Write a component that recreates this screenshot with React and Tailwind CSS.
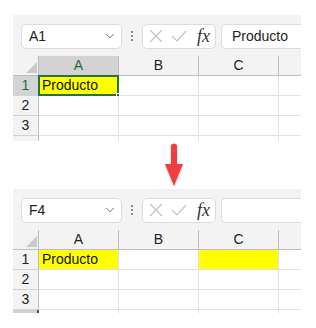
import React from "react";
import { ChevronDown } from "lucide-react";

const font = { fontFamily: '"Liberation Sans", Arial, sans-serif' };

const cols = ["A", "B", "C"];

const Toolbar = ({ name, value }) => (
  <div className="flex items-center h-[41px] pl-[8px] pt-[1px]">
    <div className="shrink-0 flex items-center justify-between w-[101px] h-[25px] bg-white rounded-[5px] border border-[#dcdcdc] pl-[7px] pr-[4px] text-[14px] text-[#222]">
      <span>{name}</span>
      <ChevronDown size={14} strokeWidth={1.5} className="text-[#555]" />
    </div>
    <div className="shrink-0 flex flex-col gap-[2px] mx-[9px]">
      <span className="w-[2px] h-[2px] bg-[#888]" />
      <span className="w-[2px] h-[2px] bg-[#888]" />
      <span className="w-[2px] h-[2px] bg-[#888]" />
    </div>
    <div className="shrink-0 flex items-center w-[74px] h-[25px] bg-white rounded-[5px] border border-[#dcdcdc] pl-[6px]">
      <svg width="14" height="14" viewBox="0 0 14 14" className="mr-[8px]">
        <path d="M1 1L13 13M13 1L1 13" stroke="#c3c3c3" strokeWidth="1.2" fill="none" />
      </svg>
      <svg width="16" height="12" viewBox="0 0 16 12" className="mr-[10px]">
        <path d="M1 6L6 11L15 1" stroke="#c3c3c3" strokeWidth="1.2" fill="none" />
      </svg>
      <span
        className="italic text-[18px] leading-none text-[#333]"
        style={{ fontFamily: '"Liberation Serif", "Times New Roman", serif' }}
      >
        fx
      </span>
    </div>
    <div className="shrink-0 flex items-center ml-[5px] w-[100px] h-[25px] bg-white rounded-l-[5px] border border-r-0 border-[#dcdcdc] pl-[10px] text-[14px] text-[#222]">
      {value}
    </div>
  </div>
);

const Sheet = ({ first, height }) => {
  const rows = [1, 2, 3, 4];
  return (
    <div
      className="w-[288px] overflow-hidden bg-[#f3f3f3]"
      style={{ ...font, height }}
    >
      <Toolbar name={first ? "A1" : "F4"} value={first ? "Producto" : ""} />
      <div className="grid grid-cols-[26px_80px_80px_80px_1fr] bg-white">
        <div className="h-[20px] bg-[#f3f3f3] border-r border-b border-[#bdbdbd] flex items-end justify-end pr-[1px] pb-[2px]">
          <svg width="11" height="11" viewBox="0 0 11 11">
            <path d="M11 0L11 11L0 11Z" fill="#c9c9c9" />
          </svg>
        </div>
        {cols.map((c) => (
          <div
            key={c}
            className={`h-[20px] flex items-center justify-center text-[14px] border-r border-b border-[#bdbdbd] ${
              first && c === "A" ? "bg-[#d3d3d3] text-[#1e6b41] border-b-[#217346]" : "bg-[#f3f3f3] text-[#222]"
            }`}
          >
            {c}
          </div>
        ))}
        <div className="h-[20px] bg-[#f3f3f3] border-b border-[#bdbdbd]" />
        {rows.map((r) => {
          const selHead = (first && r === 1) || (!first && r === 4);
          return (
            <React.Fragment key={r}>
              <div
                className={`h-[20px] flex items-center justify-center text-[14px] border-b border-[#d4d4d4] ${
                  selHead
                    ? first
                      ? "bg-[#d3d3d3] text-[#1e6b41] border-r border-r-[#bdbdbd]"
                      : "bg-[#d3d3d3] border-r-2 border-r-[#217346]"
                    : "bg-[#f3f3f3] text-[#222] border-r border-r-[#bdbdbd]"
                }`}
              >
                {r < 4 ? r : ""}
              </div>
              {cols.map((c) => {
                const yellow = r === 1 && (c === "A" || (!first && c === "C"));
                const sel = first && r === 1 && c === "A";
                return (
                  <div
                    key={c}
                    className={`relative h-[20px] flex items-center pl-[3px] text-[14px] text-[#111] border-r border-b border-[#e1e1e1] ${
                      yellow ? "bg-[#ffff00]" : "bg-white"
                    }`}
                  >
                    {r === 1 && c === "A" ? "Producto" : ""}
                    {sel && (
                      <>
                        <div className="absolute -left-[1px] -top-[1px] -right-[1px] -bottom-[1px] border-2 border-[#217346]" />
                        <div className="absolute -right-[4px] -bottom-[4px] w-[6px] h-[6px] bg-[#217346] border border-white" />
                      </>
                    )}
                  </div>
                );
              })}
              <div className="h-[20px] border-b border-[#e1e1e1] bg-white" />
            </React.Fragment>
          );
        })}
      </div>
    </div>
  );
};

export default function App() {
  return (
    <div className="w-[316px] h-[328px] bg-white pt-[15px] pl-[13px]">
      <Sheet first height="126px" />
      <div className="h-[48px] pl-[150px]">
        <svg width="22" height="48" viewBox="0 0 22 48">
          <defs>
            <filter id="sh" x="-50%" y="-20%" width="200%" height="150%">
              <feDropShadow dx="0" dy="1" stdDeviation="1" floodColor="#000" floodOpacity="0.25" />
            </filter>
          </defs>
          <g filter="url(#sh)">
            <path d="M8 4 Q11 1 14 4 L14 23 L20 23 L11 45 L2 23 L8 23 Z" fill="#f03d3d" />
          </g>
        </svg>
      </div>
      <Sheet height="124px" />
    </div>
  );
}
